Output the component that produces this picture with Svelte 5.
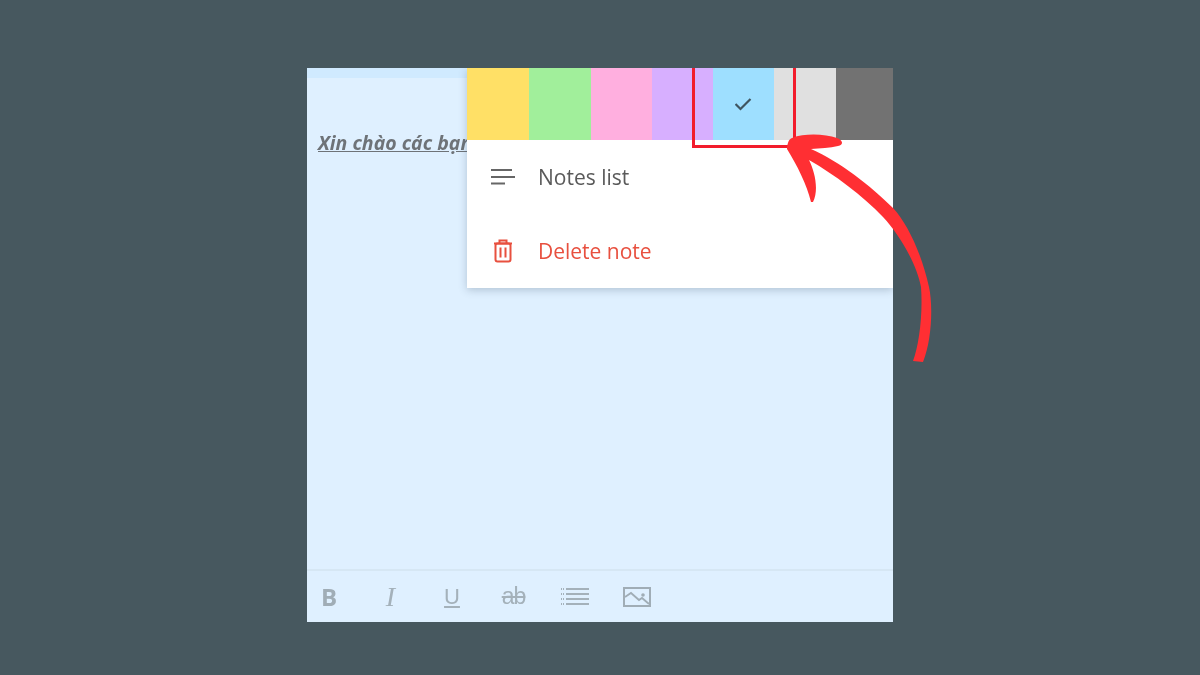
<script>
  const swatches = [
    { color: '#ffe066', width: 62 },
    { color: '#a1ef9b', width: 62 },
    { color: '#ffafdf', width: 61 },
    { color: '#d7afff', width: 61 },
    { color: '#9edfff', width: 61, selected: true },
    { color: '#e0e0e0', width: 62 },
    { color: '#727272', width: 57 }
  ];
</script>

<main class="page">
  <section class="note">
    <div class="band"></div>
    <div class="content">
      <p class="greeting">Xin chào các bạn</p>
    </div>
    <div class="toolbar">
      <span class="tool bold">B</span>
      <span class="tool italic">I</span>
      <span class="tool under">U</span>
      <span class="tool strike">ab</span>
      <span class="tool">
        <svg width="28" height="22" viewBox="0 0 28 22" aria-hidden="true">
          <g stroke="#a4b1ba" fill="none" stroke-width="2">
            <path d="M5 3h23M5 8h23M5 13h23M5 18h23" />
            <path d="M0 3h3M0 8h3M0 13h3M0 18h3" stroke-dasharray="1 1" />
          </g>
        </svg>
      </span>
      <span class="tool">
        <svg width="28" height="22" viewBox="0 0 28 22" aria-hidden="true">
          <rect x="1" y="2" width="26" height="18" fill="none" stroke="#a0adb6" stroke-width="2" />
          <path d="M2 11l6-4 8 7 3-2 7 6" fill="none" stroke="#a0adb6" stroke-width="1.800" />
          <circle cx="20" cy="9" r="1.800" fill="#a0adb6" />
        </svg>
      </span>
    </div>

    <div class="menu">
      <div class="swatches">
        {#each swatches as s}
          <div class="swatch" style="background: {s.color}; width: {s.width}px">
            {#if s.selected}
              <svg width="18" height="14" viewBox="0 0 18 14" aria-hidden="true">
                <path d="M0.500 7l5 5L15.500 2" fill="none" stroke="#3f5560" stroke-width="2.200" />
              </svg>
            {/if}
          </div>
        {/each}
      </div>
      <div class="item">
        <svg class="item-icon" width="24" height="18" viewBox="0 0 24 18" aria-hidden="true">
          <path d="M0 2h21M0 9h24M0 15.500h14" stroke="#666" stroke-width="2.200" fill="none" />
        </svg>
        <span>Notes list</span>
      </div>
      <div class="item danger">
        <svg class="item-icon" width="24" height="24" viewBox="0 0 24 24" aria-hidden="true">
          <g fill="none" stroke="#e8503f" stroke-width="2">
            <path d="M3 4.500h18M8.500 4.500V1.500h7v3" />
            <rect x="4.500" y="4.500" width="15" height="18" rx="2" />
            <path d="M9.500 8.500v10M14.500 8.500v10" />
          </g>
        </svg>
        <span>Delete note</span>
      </div>
    </div>

    <div class="selection"></div>
  </section>

  <svg class="arrow" width="1200" height="675" viewBox="0 0 1200 675" aria-hidden="true">
    <path
      fill="#ff2f33"
      d="M787 147 C788 142 789 139 792 138 C805 133 825 134 837 138 C843 140 844 145 838 146
         C830 148 820 148 811 149
         C840 162 870 185 893 208 C908 224 922 255 929 287 C933 305 932 340 923 362 L913 361
         C919 345 923 315 921 287 C917 265 900 235 883 217 C862 195 835 175 809 160
         C815 172 819 190 813 202 L811 202 C807 185 797 165 787 149 Z"
    />
  </svg>
</main>

<style>
  :global(body) {
    margin: 0;
    background: #47585f;
  }

  .page {
    position: relative;
    width: 1200px;
    height: 675px;
    box-sizing: border-box;
    padding-top: 68px;
    display: flex;
    justify-content: center;
    align-items: flex-start;
    overflow: hidden;
    font-family: "Open Sans", "Noto Sans", sans-serif;
  }

  .note {
    position: relative;
    width: 586px;
    height: 554px;
    display: flex;
    flex-direction: column;
    background: #dff0ff;
    overflow: hidden;
    filter: blur(0.5px);
  }

  .band {
    height: 10px;
    background: #d0eaff;
  }

  .content {
    flex: 1;
    padding: 52px 11px 0;
  }

  .greeting {
    margin: 0;
    font: italic 700 19.500px/26px "Open Sans", sans-serif;
    color: #6e7378;
    text-decoration: underline;
    white-space: nowrap;
  }

  .toolbar {
    height: 53px;
    border-top: 2px solid #d6e7f4;
    display: flex;
    align-items: center;
    gap: 17.500px;
    box-sizing: border-box;
  }

  .tool {
    flex: none;
    width: 44px;
    display: flex;
    justify-content: center;
    align-items: center;
    line-height: 1;
    color: #a4b1ba;
  }

  .bold {
    font: 700 24px/1 "Open Sans", sans-serif;
    color: #a0adb6;
  }

  .italic {
    font: italic 400 28px/1 "Liberation Serif", serif;
  }

  .under {
    font: 400 22px/1 "Liberation Sans", sans-serif;
    text-decoration: underline;
  }

  .strike {
    font: 400 23px/1 "Liberation Sans", sans-serif;
    text-decoration: line-through;
    letter-spacing: -1px;
  }

  .menu {
    position: absolute;
    top: 0;
    left: 160px;
    width: 426px;
    height: 220px;
    background: #fff;
    box-shadow: 0 2px 8px rgba(70, 90, 110, 0.3);
    display: flex;
    flex-direction: column;
  }

  .swatches {
    display: flex;
    height: 72px;
    flex: none;
  }

  .swatch {
    flex: none;
    display: flex;
    align-items: center;
    justify-content: center;
  }

  .item {
    height: 74px;
    display: flex;
    align-items: center;
    padding-left: 24px;
    gap: 23px;
    font-size: 21px;
    color: #5a5a5a;
  }

  .item-icon {
    flex: none;
  }

  .danger {
    color: #e8503f;
  }

  .selection {
    position: absolute;
    left: 385px;
    top: -4px;
    width: 104px;
    height: 84px;
    box-sizing: border-box;
    border: 3px solid #f21c2c;
  }

  .arrow {
    position: absolute;
    top: 0;
    left: 0;
    pointer-events: none;
  }
</style>
